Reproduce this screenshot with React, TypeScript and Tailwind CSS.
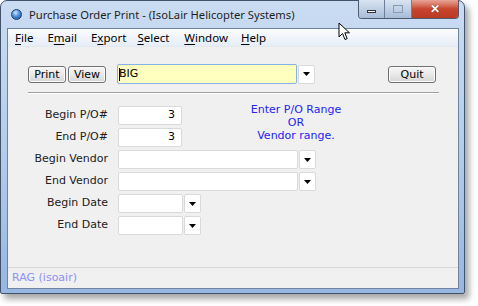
import React from "react"

const ui = { fontFamily: '"DejaVu Sans", Verdana, sans-serif' }
const sys = { fontFamily: '"Noto Sans", "Open Sans", sans-serif' }

function Arrow() {
  return (
    <svg width="7" height="4" viewBox="0 0 7 4">
      <path d="M0 0H7L3.5 4Z" fill="#000" />
    </svg>
  )
}

function Btn({ label, className = "" }: { label: string; className?: string }) {
  return (
    <button
      className={`h-[17px] rounded-[3px] border border-[#707070] bg-gradient-to-b from-[#f6f6f6] via-[#e9e9e9] to-[#d6d6d6] text-[11px] leading-none text-black shadow-[inset_0_0_0_1px_#fcfcfc] ${className}`}
    >
      {label}
    </button>
  )
}

function DropBtn() {
  return (
    <div className="ml-[1px] flex h-[19px] w-[17px] items-center justify-center rounded-[2px] border border-[#dadada] bg-white">
      <Arrow />
    </div>
  )
}

function Row({ label, children }: { label: string; children: React.ReactNode }) {
  return (
    <div className="flex h-[19px] items-center">
      <div className="w-[100px] text-right text-[11px] text-[#202020]">{label}</div>
      <div className="ml-[10px] flex items-center">{children}</div>
    </div>
  )
}

function Box({ w, value }: { w: string; value?: string }) {
  return (
    <div
      className={`flex h-[19px] ${w} items-center justify-end rounded-[2px] border border-[#dadada] bg-white pr-[6px] text-[11px] text-black`}
    >
      {value}
    </div>
  )
}

export default function App() {
  const menus: [string, string, string, string][] = [
    ["", "F", "ile", "ml-[7px]"],
    ["E", "m", "ail", "ml-[14px]"],
    ["E", "x", "port", "ml-[14px]"],
    ["", "S", "elect", "ml-[11px]"],
    ["", "W", "indow", "ml-[15px]"],
    ["", "H", "elp", "ml-[13px]"],
  ]

  return (
    <div className="relative h-[306px] w-[478px] overflow-hidden bg-white" style={ui}>
      <div className="flex h-[294px] w-[465px] flex-col rounded-t-[7px] rounded-b-[2px] border border-[#41536b] bg-gradient-to-b from-[#cadcf2] via-[#b4cdeb] to-[#97b6e2] shadow-[4px_5px_6px_rgba(0,0,0,0.35)]">
        {/* title bar */}
        <div className="flex h-[27px] items-start">
          <div className="ml-[10px] mt-[8px] h-[11px] w-[11px] rounded-full border border-[#1f3f6f] bg-[radial-gradient(circle_at_40%_30%,#cfe6ff_0%,#4d8fd8_45%,#174a93_100%)]" />
          <div className="ml-[7px] mt-[6px] text-[11.2px] text-[#1e1e1e]" style={sys}>
            Purchase Order Print - (IsoLair Helicopter Systems)
          </div>
          <div className="ml-auto mr-[5px] -mt-[1px] flex h-[19px] overflow-hidden rounded-b-[4px] border border-t-0 border-[#4d5b70]">
            <div className="flex w-[26px] items-center justify-center border-r border-[#6d7f98] bg-gradient-to-b from-[#d9e4f2] to-[#a8bcd8]">
              <div className="mt-[4px] h-[3px] w-[9px] border border-[#333] bg-white" />
            </div>
            <div className="flex w-[27px] items-center justify-center border-r border-[#6d7f98] bg-gradient-to-b from-[#d9e4f2] to-[#a8bcd8]">
              <div className="h-[8px] w-[10px] border border-[#8a9ab2] bg-transparent" />
            </div>
            <div className="flex w-[46px] items-center justify-center bg-gradient-to-b from-[#e8a497] via-[#c8452f] to-[#b83a22] text-[12px] font-bold text-white [text-shadow:0_0_1px_#3a1a10]" style={sys}>
              ✕
            </div>
          </div>
        </div>

        {/* client */}
        <div className="mb-[4px] ml-[6px] mr-[5px] flex flex-1 flex-col border border-[#6f83a0] bg-[#f0f0f0]">
          <div className="flex h-[18px] items-center border-b border-[#e4e9f1] bg-gradient-to-b from-[#fbfcfe] to-[#e6edf7] text-[11.5px] text-black" style={sys}>
            {menus.map(([a, u, b, m]) => (
              <span key={u + b} className={`${m} pt-[1px]`}>
                {a}
                <span className="underline underline-offset-2">{u}</span>
                {b}
              </span>
            ))}
          </div>

          {/* toolbar */}
          <div className="mt-[17px] flex items-center pl-[20px]">
            <Btn label="Print" className="w-[38px]" />
            <Btn label="View" className="ml-[2px] w-[38px]" />
            <div className="ml-[11px] flex h-[20px] w-[180px] items-center rounded-[2px] border border-[#86b3e6] bg-[#ffffc0] pl-[1px] text-[11px] text-black">
              <span className="mr-[-1px] h-[13px] w-[1px] bg-black" />
              BIG
            </div>
            <DropBtn />
            <Btn label="Quit" className="ml-[73px] w-[48px]" />
          </div>

          <div className="ml-[20px] mt-[8px] w-[411px] border-t border-[#a0a0a0] shadow-[0_1px_0_#ffffff]" />

          {/* form */}
          <div className="relative mt-[13px] flex flex-col gap-[3px]">
            <Row label="Begin P/O#">
              <Box w="w-[64px]" value="3" />
            </Row>
            <Row label="End P/O#">
              <Box w="w-[64px]" value="3" />
            </Row>
            <Row label="Begin Vendor">
              <Box w="w-[180px]" />
              <DropBtn />
            </Row>
            <Row label="End Vendor">
              <Box w="w-[180px]" />
              <DropBtn />
            </Row>
            <Row label="Begin Date">
              <Box w="w-[65px]" />
              <DropBtn />
            </Row>
            <Row label="End Date">
              <Box w="w-[65px]" />
              <DropBtn />
            </Row>
            <div className="absolute left-[233px] top-[-3px] w-[110px] text-center text-[11px] leading-[13px] text-[#2424f0]">
              Enter P/O Range
              <br />
              OR
              <br />
              Vendor range.
            </div>
          </div>

          {/* status */}
          <div className="mt-auto flex h-[21px] items-center border-t border-[#d7d7d7] pl-[4px] text-[11px] text-[#8f8ff5]">
            RAG (isoair)
          </div>
        </div>
      </div>

      {/* mouse cursor */}
      <svg className="absolute left-[338px] top-[22px]" width="13" height="20" viewBox="0 0 13 20">
        <path d="M1 1V15L4.5 11.5L7 17.5L9.2 16.6L6.8 10.8H11.5Z" fill="#fff" stroke="#000" strokeWidth="1" strokeLinejoin="round" />
      </svg>
    </div>
  )
}
